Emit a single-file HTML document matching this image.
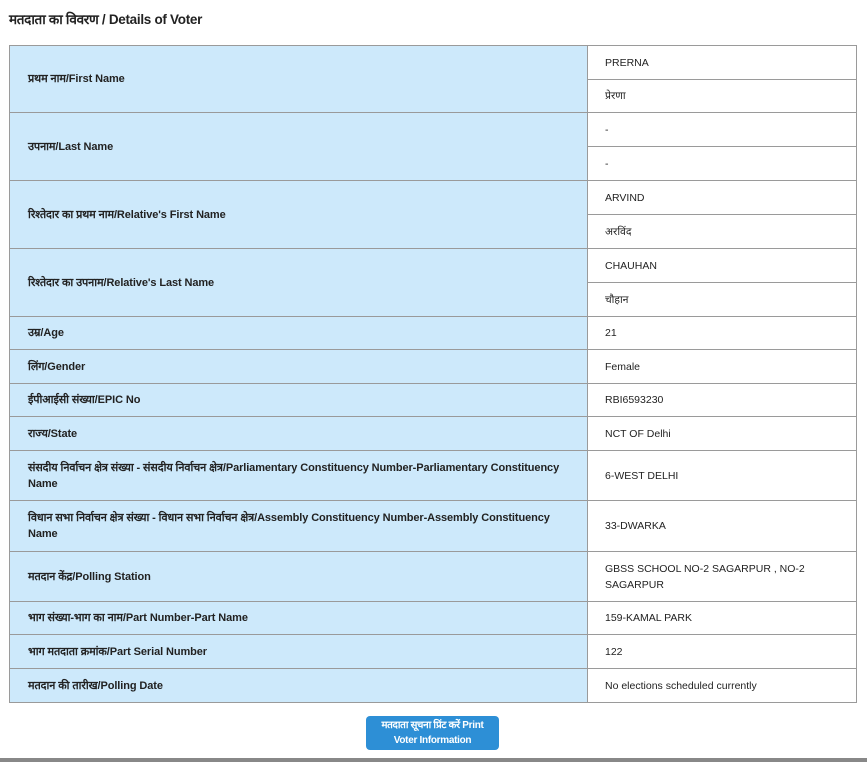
<!DOCTYPE html>
<html><head><meta charset="utf-8"><style>
*{margin:0;padding:0;box-sizing:border-box}
body{width:867px;height:762px;background:#fff;position:relative;overflow:hidden;font-family:"Liberation Sans",sans-serif;color:#222}
.t{position:absolute;left:9px;top:10px;font-size:13.5px;font-weight:bold;letter-spacing:-0.3px}
.l,.v{position:absolute;border:1px solid #9a9a9a;display:flex;align-items:center;font-size:10.5px}
.l{left:9px;width:579px;background:#cde9fb;padding:0 18px;font-weight:bold;font-size:11px;letter-spacing:-0.1px;line-height:16px}
.v{left:587px;width:270px;background:#fff;padding:0 17px;line-height:16px}
.btn{position:absolute;left:366px;top:716px;width:133px;height:34px;background:#2d8fd6;border-radius:4px;color:#fff;font-size:10px;font-weight:bold;text-align:center;line-height:15px;padding-top:2px;letter-spacing:-0.3px}
.bar{position:absolute;left:0;top:758px;width:867px;height:4px;background:#888}
</style></head><body>
<div class="t">मतदाता का विवरण / Details of Voter</div>

<div class="l" style="top:45px;height:68px">प्रथम नाम/First Name</div>
<div class="v" style="top:45px;height:35px">PRERNA</div>
<div class="v" style="top:79px;height:34px">प्रेरणा</div>

<div class="l" style="top:112px;height:69px">उपनाम/Last Name</div>
<div class="v" style="top:112px;height:35px">-</div>
<div class="v" style="top:146px;height:35px">-</div>

<div class="l" style="top:180px;height:69px">रिश्तेदार का प्रथम नाम/Relative's First Name</div>
<div class="v" style="top:180px;height:35px">ARVIND</div>
<div class="v" style="top:214px;height:35px">अरविंद</div>

<div class="l" style="top:248px;height:69px">रिश्तेदार का उपनाम/Relative's Last Name</div>
<div class="v" style="top:248px;height:35px">CHAUHAN</div>
<div class="v" style="top:282px;height:35px">चौहान</div>

<div class="l" style="top:316px;height:34px">उम्र/Age</div>
<div class="v" style="top:316px;height:34px">21</div>
<div class="l" style="top:349px;height:35px">लिंग/Gender</div>
<div class="v" style="top:349px;height:35px">Female</div>
<div class="l" style="top:383px;height:34px">ईपीआईसी संख्या/EPIC No</div>
<div class="v" style="top:383px;height:34px">RBI6593230</div>
<div class="l" style="top:416px;height:35px">राज्य/State</div>
<div class="v" style="top:416px;height:35px">NCT OF Delhi</div>
<div class="l" style="top:450px;height:51px;padding-right:20px">संसदीय निर्वाचन क्षेत्र संख्या - संसदीय निर्वाचन क्षेत्र/Parliamentary Constituency Number-Parliamentary Constituency<br>Name</div>
<div class="v" style="top:450px;height:51px">6-WEST DELHI</div>
<div class="l" style="top:500px;height:52px;padding-right:20px">विधान सभा निर्वाचन क्षेत्र संख्या - विधान सभा निर्वाचन क्षेत्र/Assembly Constituency Number-Assembly Constituency<br>Name</div>
<div class="v" style="top:500px;height:52px">33-DWARKA</div>
<div class="l" style="top:551px;height:51px">मतदान केंद्र/Polling Station</div>
<div class="v" style="top:551px;height:51px">GBSS SCHOOL NO-2 SAGARPUR , NO-2 SAGARPUR</div>
<div class="l" style="top:601px;height:34px">भाग संख्या-भाग का नाम/Part Number-Part Name</div>
<div class="v" style="top:601px;height:34px">159-KAMAL PARK</div>
<div class="l" style="top:634px;height:35px">भाग मतदाता क्रमांक/Part Serial Number</div>
<div class="v" style="top:634px;height:35px">122</div>
<div class="l" style="top:668px;height:35px">मतदान की तारीख/Polling Date</div>
<div class="v" style="top:668px;height:35px">No elections scheduled currently</div>

<div class="btn">मतदाता सूचना प्रिंट करें Print<br>Voter Information</div>
<div class="bar"></div>
</body></html>
